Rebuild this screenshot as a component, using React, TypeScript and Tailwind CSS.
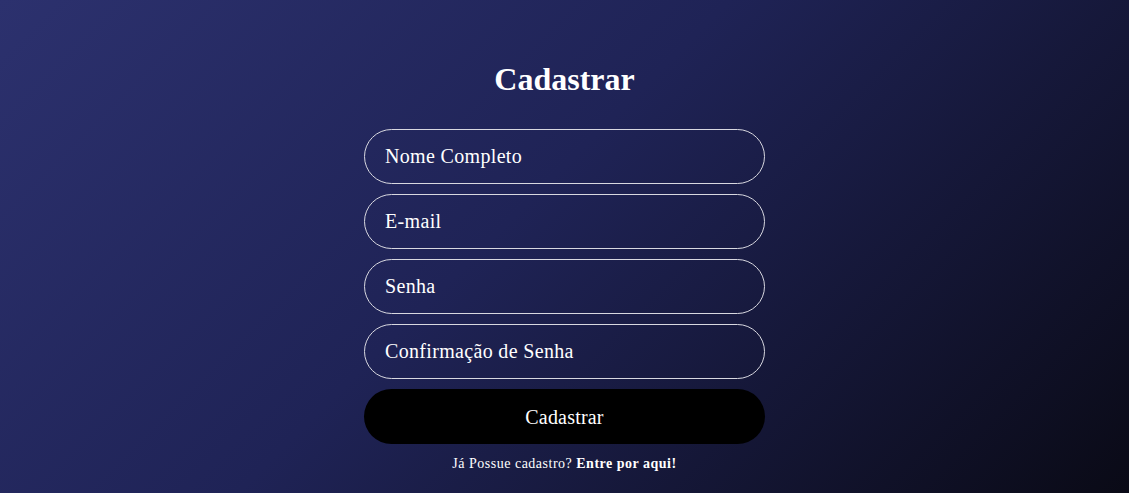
export default function App() {
  const fields = ["Nome Completo", "E-mail", "Senha", "Confirmação de Senha"];

  return (
    <div className="min-h-screen w-full bg-[linear-gradient(135deg,#2c316e_0%,#1f2356_45%,#0a0a16_100%)] text-white font-['Liberation_Serif',serif]">
      <form
        className="mx-auto flex w-[401px] flex-col items-center pt-[61px]"
        onSubmit={(e) => e.preventDefault()}
      >
        <h1 className="mb-[31px] text-[32px] font-bold leading-[37px]">Cadastrar</h1>

        <div className="flex w-full flex-col gap-[10px]">
          {fields.map((f) => (
            <input
              key={f}
              type={f.startsWith("Senha") || f.startsWith("Confirma") ? "password" : "text"}
              placeholder={f}
              className="h-[55px] w-full rounded-full border border-[#d8d8e0] bg-transparent px-5 text-[20px] tracking-[0.33px] text-white outline-none placeholder:text-white"
            />
          ))}
          <button
            type="submit"
            className="h-[55px] w-full rounded-full bg-black text-[20px] tracking-[0.2px] text-white"
          >
            Cadastrar
          </button>
        </div>

        <p className="mt-[9px] text-[14px] tracking-[0.5px]">
          Já Possue cadastro? <a className="font-bold">Entre por aqui!</a>
        </p>
      </form>
    </div>
  );
}
